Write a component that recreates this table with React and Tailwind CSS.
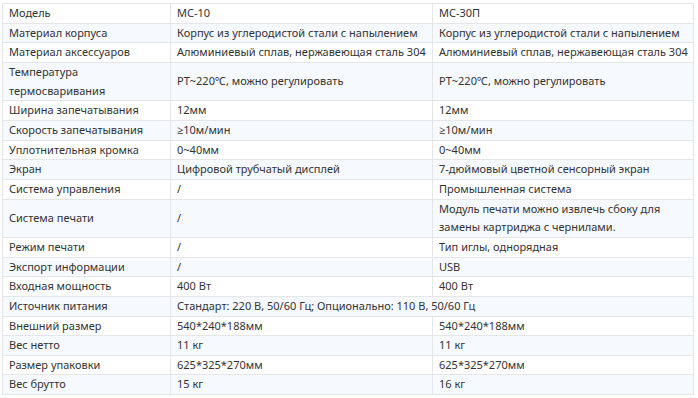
import React from "react";

const rows = [
  ["Модель", "MC-10", "MC-30П"],
  ["Материал корпуса", "Корпус из углеродистой стали с напылением", "Корпус из углеродистой стали с напылением"],
  ["Материал аксессуаров", "Алюминиевый сплав, нержавеющая сталь 304", "Алюминиевый сплав, нержавеющая сталь 304"],
  ["Температура термосваривания", "PT~220℃, можно регулировать", "PT~220℃, можно регулировать"],
  ["Ширина запечатывания", "12мм", "12мм"],
  ["Скорость запечатывания", "≥10м/мин", "≥10м/мин"],
  ["Уплотнительная кромка", "0~40мм", "0~40мм"],
  ["Экран", "Цифровой трубчатый дисплей", "7-дюймовый цветной сенсорный экран"],
  ["Система управления", "/", "Промышленная система"],
  ["Система печати", "/", "Модуль печати можно извлечь сбоку для замены картриджа с чернилами."],
  ["Режим печати", "/", "Тип иглы, однорядная"],
  ["Экспорт информации", "/", "USB"],
  ["Входная мощность", "400 Вт", "400 Вт"],
  ["Источник питания", "Стандарт: 220 В, 50/60 Гц; Опционально: 110 В, 50/60 Гц", null],
  ["Внешний размер", "540*240*188мм", "540*240*188мм"],
  ["Вес нетто", "11 кг", "11 кг"],
  ["Размер упаковки", "625*325*270мм", "625*325*270мм"],
  ["Вес брутто", "15 кг", "16 кг"],
];

const td = "border border-[#e4e6ea] pl-[6px] pr-[4px] py-0 align-middle";

export default function App() {
  return (
    <div className="w-[698px] h-[398px] bg-white pt-[3px] pl-[2px]">
      <table
        className="table-fixed border-collapse w-[691px] text-[11px] leading-[18.65px] text-[#333333]"
        style={{ fontFamily: '"Noto Sans", "Open Sans", sans-serif' }}
      >
        <colgroup>
          <col className="w-[168px]" />
          <col className="w-[262px]" />
          <col className="w-[261px]" />
        </colgroup>
        <tbody>
          {rows.map((r, i) => (
            <tr key={i} className={i % 2 === 1 ? "bg-[#f6f9fe]" : "bg-white"}>
              <td className={td}>{r[0]}</td>
              {r[2] === null ? (
                <td className={td} colSpan={2}>
                  {r[1]}
                </td>
              ) : (
                <>
                  <td className={td}>{r[1]}</td>
                  <td className={td}>{r[2]}</td>
                </>
              )}
            </tr>
          ))}
        </tbody>
      </table>
    </div>
  );
}
